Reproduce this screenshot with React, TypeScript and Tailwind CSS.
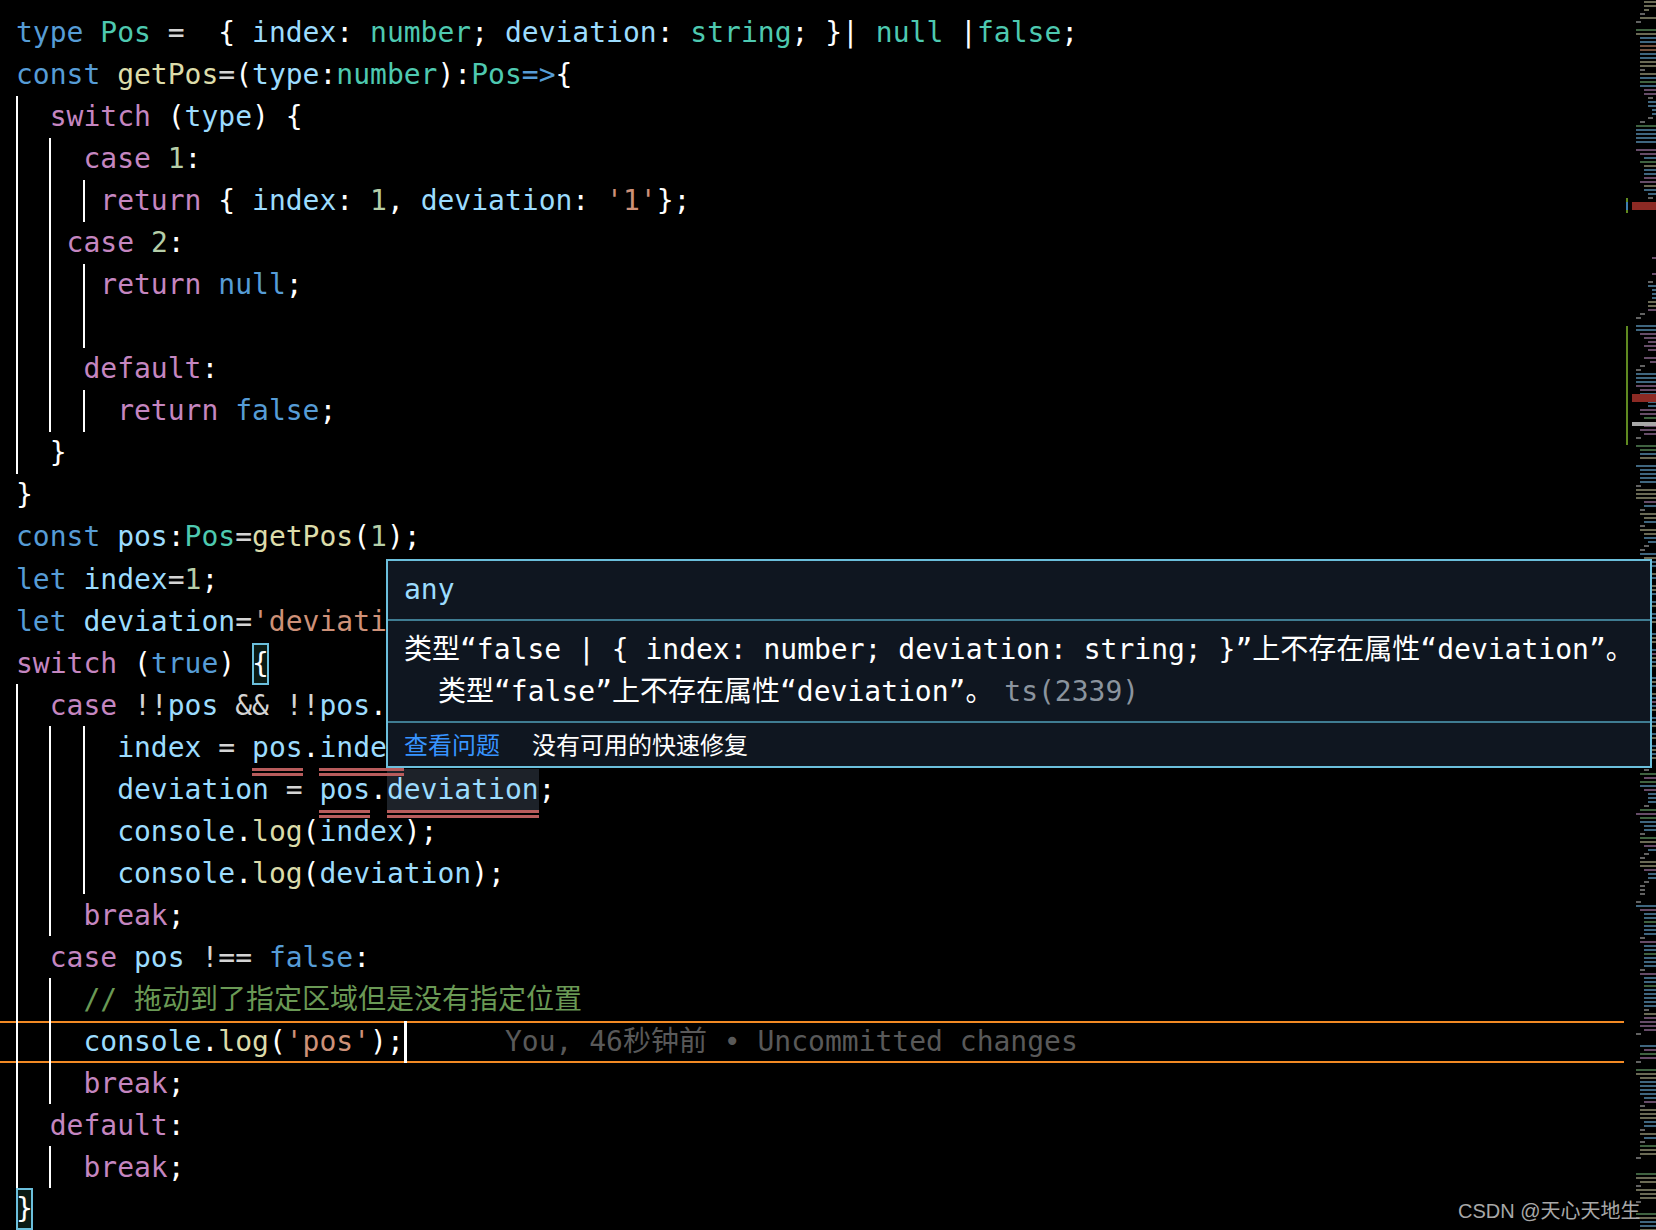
import type { ReactNode } from "react";

const mono = "font-['DejaVu_Sans_Mono','Noto_Sans_CJK_SC',monospace]";

type GuideLine = { g?: number[]; body: ReactNode };

const K = ({ children }: { children: ReactNode }) => <span className="text-[#569cd6]">{children}</span>;
const T = ({ children }: { children: ReactNode }) => <span className="text-[#4ec9b0]">{children}</span>;
const V = ({ children }: { children: ReactNode }) => <span className="text-[#9cdcfe]">{children}</span>;
const C = ({ children }: { children: ReactNode }) => <span className="text-[#c586c0]">{children}</span>;
const N = ({ children }: { children: ReactNode }) => <span className="text-[#b5cea8]">{children}</span>;
const S = ({ children }: { children: ReactNode }) => <span className="text-[#ce9178]">{children}</span>;
const F = ({ children }: { children: ReactNode }) => <span className="text-[#dcdcaa]">{children}</span>;
const O = ({ children }: { children: ReactNode }) => <span className="text-[#d4d4d4]">{children}</span>;

// red double underline of the ts error, hangs just under the line
const Err = ({ children }: { children: ReactNode }) => (
  <span className="relative inline-block text-[#9cdcfe]">
    {children}
    <span className="absolute z-10 left-0 right-0 top-[41px] h-[8px] border-y-[3px] border-[#b85c5c]" />
  </span>
);

const Match = ({ children }: { children: ReactNode }) => (
  <span className="relative inline-block">
    <span className="absolute inset-0 bg-[#0a1a14] border-2 border-[#6bbfdc]" />
    <span className="relative">{children}</span>
  </span>
);

const lines: GuideLine[] = [
  { body: <><K>type</K> <T>Pos</T> <O>=</O>  {"{"} <V>index</V>: <T>number</T>; <V>deviation</V>: <T>string</T>; {"}"}| <T>null</T> |<T>false</T>;</> },
  { body: <><K>const</K> <F>getPos</F><O>=</O>(<V>type</V>:<T>number</T>):<T>Pos</T><K>=&gt;</K>{"{"}</> },
  { g: [17], body: <>  <C>switch</C> (<V>type</V>) {"{"}</> },
  { g: [17, 50], body: <>    <C>case</C> <N>1</N>:</> },
  { g: [17, 50, 84], body: <>     <C>return</C> {"{"} <V>index</V>: <N>1</N>, <V>deviation</V>: <S>'1'</S>{"}"};</> },
  { g: [17, 50], body: <>   <C>case</C> <N>2</N>:</> },
  { g: [17, 50, 84], body: <>     <C>return</C> <K>null</K>;</> },
  { g: [17, 50, 84], body: <> </> },
  { g: [17, 50], body: <>    <C>default</C>:</> },
  { g: [17, 50, 84], body: <>      <C>return</C> <K>false</K>;</> },
  { g: [17], body: <>  {"}"}</> },
  { body: <>{"}"}</> },
  { body: <><K>const</K> <V>pos</V>:<T>Pos</T><O>=</O><F>getPos</F>(<N>1</N>);</> },
  { body: <><K>let</K> <V>index</V><O>=</O><N>1</N>;</> },
  { body: <><K>let</K> <V>deviation</V><O>=</O><S>'deviation'</S>;</> },
  { body: <><C>switch</C> (<K>true</K>) <Match>{"{"}</Match></> },
  { g: [17], body: <>  <C>case</C> <O>!!</O><V>pos</V> <O>&amp;&amp;</O> <O>!!</O><V>pos</V>.<V>deviation</V>:</> },
  { g: [17, 50, 84], body: <>      <V>index</V> <O>=</O> <Err>pos</Err>.<Err>index</Err>;</> },
  { g: [17, 50, 84], body: <>      <V>deviation</V> <O>=</O> <Err>pos</Err>.<span className="bg-[#1d2229] inline-block"><Err>deviation</Err></span>;</> },
  { g: [17, 50, 84], body: <>      <V>console</V>.<F>log</F>(<V>index</V>);</> },
  { g: [17, 50, 84], body: <>      <V>console</V>.<F>log</F>(<V>deviation</V>);</> },
  { g: [17, 50], body: <>    <C>break</C>;</> },
  { g: [17], body: <>  <C>case</C> <V>pos</V> <O>!==</O> <K>false</K>:</> },
  { g: [17, 50], body: <>    <span className="text-[#6a9955]">// 拖动到了指定区域但是没有指定位置</span></> },
  {
    g: [17, 50],
    body: <>{"    "}<V>console</V>.<F>log</F>(<S>'pos'</S>);<span className="inline-block w-[3px] h-[42px] -mr-[3px] bg-white align-top" /><span className="text-[#595959]">{"      "}You, 46秒钟前 • Uncommitted changes</span></>,
  },
  { g: [17, 50], body: <>    <C>break</C>;</> },
  { g: [17], body: <>  <C>default</C>:</> },
  { g: [17, 50], body: <>    <C>break</C>;</> },
  { body: <Match>{"}"}</Match> },
];

const guideX: Record<number, string> = { 17: "left-[16px]", 50: "left-[49px]", 84: "left-[83px]" };

function CodeLine({ line, active, nudge }: { line: GuideLine; active: boolean; nudge: boolean }) {
  return (
    <div className="relative h-[42px] pl-[16px] whitespace-pre leading-[42px]">
      {active && <div className="absolute left-0 top-px w-[1624px] h-[42px] border-y-2 border-[#f28a24]" />}
      {line.g?.map((x) => (
        <div key={x} className={`absolute top-0 h-[42px] w-[2px] bg-white ${guideX[x]}`} />
      ))}
      <span className={nudge ? "relative top-px" : "relative"}>{line.body}</span>
    </div>
  );
}

function HoverPopup() {
  return (
    <div className="absolute z-20 left-[386px] top-[559px] w-[1266px] h-[209px] flex flex-col border-2 border-[#6bbfdc] bg-[#0f1620] text-white whitespace-pre">
      <div className="h-[58px] pl-[16px] leading-[58px] text-[#9cdcfe]">any</div>
      <div className="h-[102px] pl-[16px] pt-[8px] border-t-2 border-[#3f7c92] leading-[42px]">
        <div>类型“false | {"{"} index: number; deviation: string; {"}"}”上不存在属性“deviation”。</div>
        <div className="pl-[34px]">
          类型“false”上不存在属性“deviation”。 <span className="-ml-[6px] text-[#8b949e]">ts(2339)</span>
        </div>
      </div>
      <div className="flex-1 flex items-center gap-[32px] pl-[16px] pt-[2px] border-t-2 border-[#3f7c92] text-[24px]">
        <span className="text-[#3794ff]">查看问题</span>
        <span>没有可用的快速修复</span>
      </div>
    </div>
  );
}

// overview strip: tokens are <x/2 in base 36><colour>, capital colour = short row, "-" = empty row
const miniColours: Record<string, string> = {
  b: "#4f7f9f",
  y: "#85856a",
  p: "#7f5f82",
  g: "#4f7a50",
  o: "#8f6650",
  w: "#7a7a7a",
};

const miniSections: [number, string][] = [
  [0, "9y 9y 9Y 7W 7y 5W - 5g 5y 7b 7b 7o 7o 7b 7b 7y 7y 7W 7y 7b 7g 7b 9p 9p bW bb bb db db bW 7W 5g 5b 5b 5b 5b - 5p 7p 9b 7g 9y 9b 9b 9p 7p 9y 9b bb bW"],
  [64, "dP - - - dP - bW bb db db db by by bp 7W 5W - 5b 5b 7p 9p bp 9p bp - 9p cp 7W 5W 5b 5b 5b 5p 7p 7b db"],
  [100, "bb bb 7p 7p 9g - 9p 7p 9p 5W - 5g 7g 7b 7y - 5b 7b 7b 7b 7b 5W 5y 5y 5y 9p 9b 7W 7y 9y 9b 7W 7y 9y 9b bb 9W 7W 7b"],
  [139, "9y 9b 9b 9W 9y 9b 9W 9y 9y 9b - 9b 9y 9W 9b 9b 9y - 9W 9b 9y 9y 9W 9b 9p 9y 9b 9y 9W - 9b 9y 9b 9W 9y 9b 9p 9b 9y 9W 9b 9b 9y - 9b 9y 9W 9b 9y 9b 9y"],
  [192, "9W 7g 9p 7g 7b 9p bb bb bb 9W 7g 5p 7g 7b 9b 9b 7W 7g 7y 9p bb 9W 7W 7y 7y 9p bb bb 9W 7W 7W 7W - 5W 5b 7p 9b 9b 9g 9b 9b 9b 7W 7p 9b 9b 9g 9b 9b 9b 7W 7p 9b 9b 9g 9b 9b 9b"],
  [250, "9b 9b 9W 9y 9p 7p 7p 9p 5W - - 7b 9p 7g 7p 5W - 5g 5y 7y 7b 7b 7b 7b 9b 9p 7W 7y 7y 7y 9b 9b 7W 7y 9b 7W 7g 7y 7y 5W - - - 5g 5y 7y 5W 5y 7y 7y 5W - - 5g 5y 7b 7b 7y"],
];

const miniRows = miniSections.flatMap(([start, tokens]) =>
  tokens.split(" ").flatMap((t, i) => {
    if (t === "-") return [];
    const x = parseInt(t[0], 36) * 2;
    const short = t[1] === t[1].toUpperCase();
    return [{ y: (start + i) * 4 + 1, x, w: short ? 5 : 30 - x, c: miniColours[t[1].toLowerCase()] }];
  }),
);

function Minimap() {
  return (
    <svg className="absolute right-0 top-0" width="30" height="1230" viewBox="0 0 30 1230">
      {miniRows.map((r, i) => (
        <rect key={i} x={r.x} y={r.y} width={r.w} height={2} fill={r.c} opacity={0.8} />
      ))}
      <rect x="0" y="198" width="2" height="15" fill="#5f8a20" />
      <rect x="0" y="202" width="2" height="8" fill="#3f7fb0" />
      <rect x="6" y="202" width="24" height="8" fill="#8c2a24" />
      <rect x="0" y="326" width="2" height="119" fill="#5f8a20" />
      <rect x="6" y="394" width="24" height="8" fill="#8c2a24" />
      <rect x="6" y="422" width="24" height="4" fill="#a8a8a8" />
    </svg>
  );
}

export default function App() {
  return (
    <div className={`relative w-[1656px] h-[1230px] overflow-hidden bg-black pt-[12px] text-[28px] text-white ${mono}`}>
      {lines.map((line, i) => (
        <CodeLine key={i} line={line} active={i === 24} nudge={i >= 13 && i < 28} />
      ))}
      <Minimap />
      <HoverPopup />
      <div className="absolute left-[1458px] top-[1199px] font-['Liberation_Sans','Noto_Sans_CJK_SC',sans-serif] text-[20px] leading-[24px] text-[#a8a8a8]">
        CSDN @天心天地生
      </div>
    </div>
  );
}
